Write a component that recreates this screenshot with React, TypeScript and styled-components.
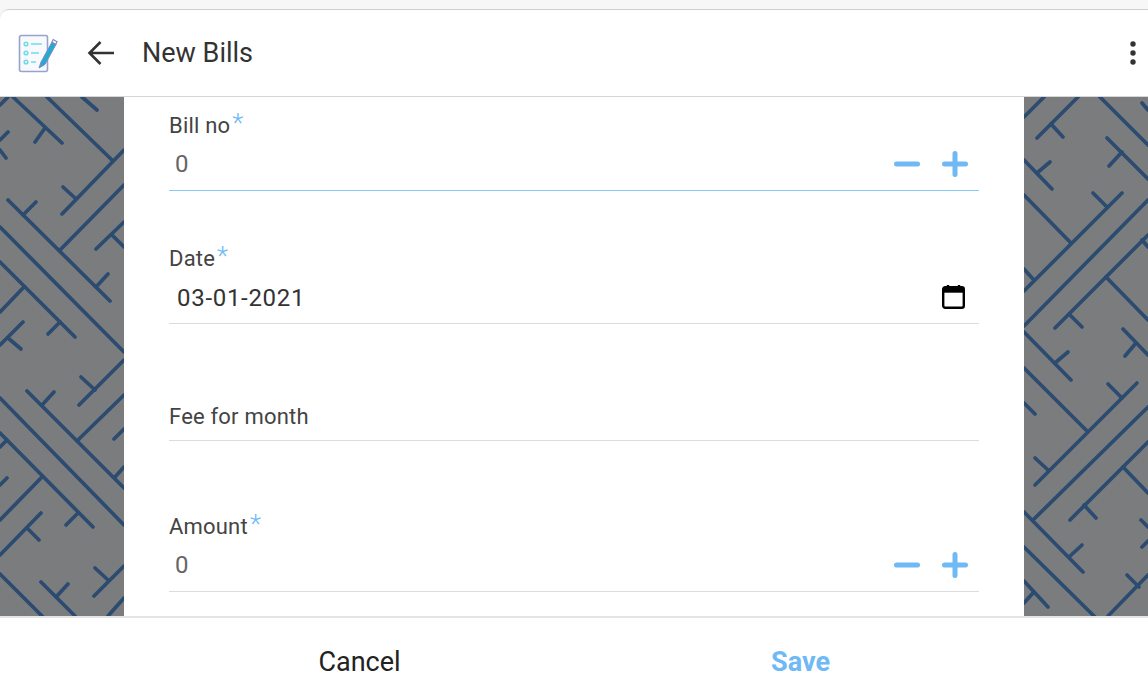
import React from 'react';
import styled, { createGlobalStyle } from 'styled-components';

const GlobalStyle = createGlobalStyle`
  html, body {
    margin: 0;
    padding: 0;
    height: 684px;
    overflow: hidden;
    background: #ffffff;
    font-family: Roboto, "Liberation Sans", sans-serif;
  }
`;

const Page = styled.div`
  height: 684px;
  display: flex;
  flex-direction: column;
  background: linear-gradient(#f7f7f7, #ececec);
  padding-top: 9px;
  box-sizing: border-box;
  overflow: hidden;
`;

const Header = styled.header`
  flex: none;
  height: 86px;
  display: flex;
  align-items: center;
  background: #ffffff;
  border-top: 1px solid #cfcfcf;
  border-bottom: 1px solid #d6d6d6;
  border-top-left-radius: 9px;
  padding-left: 18px;
  padding-right: 11px;
`;

const BackButton = styled.button`
  display: flex;
  padding: 0;
  margin-left: 29px;
  border: none;
  background: none;
  cursor: pointer;
`;

const Title = styled.h1`
  flex: 1;
  margin: 0 0 0 27px;
  font-size: 27px;
  font-weight: 400;
  color: #333333;
`;

const Main = styled.main`
  flex: 1;
  min-height: 0;
  display: flex;
`;

const Side = styled.svg`
  flex: none;
  display: block;
  width: 124px;
  height: 519px;
  background: #7b7c7e;
`;

const MazeLines = styled.g`
  filter: blur(0.45px);
`;

const Form = styled.form`
  flex: 1;
  background: #ffffff;
  padding: 14px 45px 0;
  display: flex;
  flex-direction: column;
`;

const Field = styled.div<{ $gap: number; $focused?: boolean }>`
  margin-top: ${p => p.$gap}px;
  border-bottom: 1px solid ${p => (p.$focused ? '#86cdf5' : '#dcdcdc')};
`;

const Label = styled.label<{ $plain?: boolean }>`
  display: block;
  height: 28px;
  line-height: ${p => (p.$plain ? 30 : 26)}px;
  font-size: 22px;
  letter-spacing: 0.2px;
  color: #444444;
  padding-bottom: ${p => (p.$plain ? 10 : 0)}px;
`;

const Required = styled.span`
  color: #6fb9f5;
  font-size: 26px;
  font-weight: 300;
  margin-left: 2px;
  position: relative;
  top: -1px;
`;

const ValueRow = styled.div`
  height: 51px;
  display: flex;
  align-items: center;
  padding-right: 11px;
  box-sizing: border-box;
`;

const Value = styled.span<{ $muted?: boolean }>`
  flex: 1;
  font-size: 24px;
  letter-spacing: ${p => (p.$muted ? 0 : 0.7)}px;
  padding-left: ${p => (p.$muted ? 6 : 8)}px;
  padding-bottom: ${p => (p.$muted ? 2 : 0)}px;
  color: ${p => (p.$muted ? '#666666' : '#333333')};
`;

const Stepper = styled.div`
  display: flex;
  gap: 22px;
  padding-bottom: 2px;
`;

const StepButton = styled.button`
  display: flex;
  padding: 0;
  border: none;
  background: none;
  cursor: pointer;
`;

const CalendarSvg = styled.svg`
  margin-right: 3px;
  margin-bottom: 3px;
`;

const Footer = styled.footer`
  flex: none;
  height: 68px;
  display: grid;
  grid-template-columns: 441px 441px;
  justify-items: center;
  align-items: start;
  padding-left: 139px;
  padding-top: 28px;
  box-sizing: border-box;
  background: #ffffff;
  border-top: 2px solid #e4e4e4;
`;

const FooterButton = styled.button<{ $primary?: boolean }>`
  border: none;
  background: none;
  padding: 0;
  font-family: inherit;
  font-size: 27px;
  font-weight: ${p => (p.$primary ? 700 : 400)};
  color: ${p => (p.$primary ? '#6fb9f5' : '#222222')};
  cursor: pointer;
`;

type Seg = [number, number, number, number];

const leftLines: Seg[] = [
  [13, 97, 62, 143], [45, 128, 35, 142], [0, 105, 8, 97], [0, 140, 8, 132], [0, 150, 6, 158],
  [47, 97, 113, 161], [124, 150, 62, 214], [75, 198, 63, 187], [82, 97, 97, 110],
  [8, 200, 110, 301], [23, 215, 36, 202], [60, 250, 124, 185], [96, 287, 108, 274],
  [124, 222, 96, 249], [112, 235, 124, 247], [0, 227, 124, 352],
  [0, 262, 75, 337], [24, 287, 0, 312], [60, 322, 48, 334], [23, 322, 0, 345], [8, 338, 21, 349],
  [0, 398, 124, 525], [124, 360, 79, 405], [95, 390, 81, 377],
  [27, 391, 124, 488], [42, 405, 54, 392], [78, 440, 124, 395], [115, 477, 124, 467],
  [124, 429, 114, 439], [0, 433, 93, 527], [7, 440, 0, 447], [42, 477, 0, 520], [78, 513, 66, 525],
  [7, 478, 0, 485], [41, 513, 0, 555], [27, 528, 39, 540], [0, 574, 43, 617],
  [41, 582, 75, 616], [56, 597, 68, 584], [124, 566, 94, 596], [108, 580, 95, 568], [124, 598, 108, 616],
];

const rightLines: Seg[] = [
  [1024, 117, 1044, 97], [1037, 138, 1078, 97], [1051, 124, 1063, 137], [1100, 97, 1148, 145],
  [1142, 103, 1148, 110], [1107, 138, 1148, 179], [1122, 152, 1109, 166],
  [1024, 160, 1052, 189], [1037, 173, 1050, 162], [1024, 195, 1070, 242],
  [1024, 291, 1122, 193], [1107, 207, 1093, 193], [1033, 279, 1024, 269],
  [1024, 326, 1148, 200], [1055, 328, 1148, 235], [1069, 314, 1082, 327], [1106, 277, 1148, 320],
  [1142, 240, 1148, 247], [1024, 332, 1071, 380], [1055, 363, 1068, 352],
  [1123, 329, 1148, 355], [1136, 343, 1125, 356],
  [1024, 368, 1087, 431], [1035, 485, 1137, 383], [1122, 398, 1108, 384], [1048, 470, 1035, 458],
  [1024, 403, 1035, 414], [1033, 520, 1148, 407], [1070, 520, 1148, 442], [1084, 505, 1096, 518],
  [1123, 467, 1148, 493], [1024, 512, 1083, 572], [1069, 557, 1082, 545], [1024, 547, 1095, 617],
  [1141, 520, 1148, 527], [1142, 547, 1148, 541], [1024, 581, 1048, 607], [1033, 593, 1024, 603],
  [1148, 575, 1108, 616], [1139, 587, 1127, 575],
];

const Maze = ({ lines, x }: { lines: Seg[]; x: number }) => (
  <Side viewBox={`${x} 97 124 519`} aria-hidden="true">
    <MazeLines>
      {lines.map(([x1, y1, x2, y2], i) => (
        <line key={i} x1={x1} y1={y1} x2={x2} y2={y2} stroke="#2b4b70" strokeWidth="3.7" strokeLinecap="round" />
      ))}
    </MazeLines>
  </Side>
);

const Logo = () => (
  <svg width="40" height="40" viewBox="0 0 40 40">
    <rect x="1.5" y="2.5" width="28" height="36" rx="2" fill="#f8f9fd" stroke="#98a2cf" strokeWidth="1.6" />
    <g fill="none" stroke="#6fdde8" strokeWidth="1.6">
      <circle cx="8" cy="11" r="1.8" />
      <circle cx="8" cy="20" r="1.8" />
      <circle cx="8" cy="29" r="1.8" />
      <path d="M13 11h11M13 20h8M13 29h5" />
    </g>
    <path d="M21 35l2-6 11-20 4 2.4-11 20z" fill="#25a9cf" stroke="#7d8cc4" strokeWidth="1" />
    <path d="M34 9l1.2-2.4 3.8 2.2-1.2 2.6z" fill="#ffffff" stroke="#7d8cc4" strokeWidth="1.2" />
  </svg>
);

const BackArrow = () => (
  <svg width="28" height="26" viewBox="0 0 28 26">
    <path d="M27 13H3M13.5 2L2.5 13l11 11" fill="none" stroke="#333333" strokeWidth="2.6" />
  </svg>
);

const MenuDots = () => (
  <svg width="8" height="24" viewBox="0 0 8 24">
    <circle cx="4" cy="3" r="2.7" fill="#333333" />
    <circle cx="4" cy="12" r="2.7" fill="#333333" />
    <circle cx="4" cy="21" r="2.7" fill="#333333" />
  </svg>
);

const MinusIcon = () => (
  <svg width="26" height="26" viewBox="0 0 26 26">
    <path d="M2.5 13h21" stroke="#6fb9f5" strokeWidth="5" strokeLinecap="round" />
  </svg>
);

const PlusIcon = () => (
  <svg width="26" height="26" viewBox="0 0 26 26">
    <path d="M2.5 13h21M13 2.5v21" stroke="#6fb9f5" strokeWidth="5" strokeLinecap="round" />
  </svg>
);

const CalendarIcon = () => (
  <CalendarSvg width="23" height="25" viewBox="0 0 23 25">
    <path d="M6 1v4M17 1v4" stroke="#000" strokeWidth="2.4" />
    <rect x="1.2" y="3.2" width="20.6" height="20.6" rx="2" fill="none" stroke="#000" strokeWidth="2.4" />
    <rect x="1.2" y="3.2" width="20.6" height="5.5" fill="#000" />
  </CalendarSvg>
);

const Steppers = () => (
  <Stepper>
    <StepButton type="button" aria-label="Decrease"><MinusIcon /></StepButton>
    <StepButton type="button" aria-label="Increase"><PlusIcon /></StepButton>
  </Stepper>
);

export default function App() {
  return (
    <Page>
      <GlobalStyle />
      <Header>
        <Logo />
        <BackButton type="button" aria-label="Back"><BackArrow /></BackButton>
        <Title>New Bills</Title>
        <MenuDots />
      </Header>
      <Main>
        <Maze lines={leftLines} x={0} />
        <Form>
          <Field $gap={0} $focused>
            <Label>Bill no<Required>*</Required></Label>
            <ValueRow><Value $muted>0</Value><Steppers /></ValueRow>
          </Field>
          <Field $gap={53}>
            <Label>Date<Required>*</Required></Label>
            <ValueRow><Value>03-01-2021</Value><CalendarIcon /></ValueRow>
          </Field>
          <Field $gap={78}>
            <Label $plain>Fee for month</Label>
          </Field>
          <Field $gap={71}>
            <Label>Amount<Required>*</Required></Label>
            <ValueRow><Value $muted>0</Value><Steppers /></ValueRow>
          </Field>
        </Form>
        <Maze lines={rightLines} x={1024} />
      </Main>
      <Footer>
        <FooterButton type="button">Cancel</FooterButton>
        <FooterButton type="button" $primary>Save</FooterButton>
      </Footer>
    </Page>
  );
}
